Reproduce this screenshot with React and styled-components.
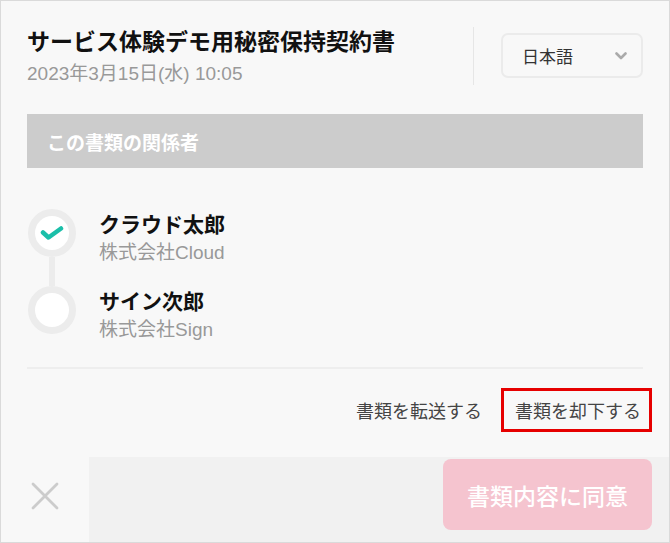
import React from "react";
import styled, { createGlobalStyle } from "styled-components";

const GlobalStyle = createGlobalStyle`
  html, body {
    margin: 0;
    padding: 0;
    background: #ffffff;
  }
  * {
    box-sizing: border-box;
  }
`;

const Frame = styled.div`
  width: 670px;
  height: 543px;
  border: 1px solid #dadada;
  background: #f8f8f8;
  display: flex;
  flex-direction: column;
  font-family: "Liberation Sans", "Noto Sans CJK JP", sans-serif;
  color: #222;
`;

const Header = styled.div`
  display: flex;
  align-items: flex-start;
  padding: 26px 26px 0 26px;
`;

const TitleBlock = styled.div`
  flex: 1;
`;

const Title = styled.h1`
  margin: 0;
  font-size: 23px;
  line-height: 30px;
  font-weight: 700;
  color: #111;
`;

const DateText = styled.div`
  margin-top: 4px;
  font-size: 19px;
  line-height: 26px;
  color: #999;
`;

const VDivider = styled.div`
  width: 1px;
  height: 58px;
  background: #e6e6e6;
  margin-right: 27px;
`;

const Select = styled.div`
  margin-top: 6px;
  width: 142px;
  height: 45px;
  border: 2px solid #ebebeb;
  border-radius: 7px;
  display: flex;
  align-items: center;
  justify-content: space-between;
  padding: 0 14px 0 19px;
  font-size: 17px;
  color: #333;
`;

const SectionBar = styled.div`
  margin: 27px 26px 0 26px;
  height: 54px;
  background: #cccccc;
  display: flex;
  align-items: center;
  padding-left: 20px;
  font-size: 19px;
  font-weight: 700;
  color: #fff;
`;

const People = styled.div`
  margin: 41px 26px 0 27px;
  display: flex;
  flex-direction: column;
`;

const PersonRow = styled.div`
  display: flex;
  align-items: flex-start;
  gap: 23px;
`;

const Track = styled.div`
  width: 48px;
  display: flex;
  flex-direction: column;
  align-items: center;
`;

const Circle = styled.div`
  width: 48px;
  height: 48px;
  border-radius: 50%;
  border: 7px solid #ececec;
  background: #fff;
  display: flex;
  align-items: center;
  justify-content: center;
`;

const Connector = styled.div`
  width: 6px;
  height: 29px;
  background: #ececec;
`;

const PersonText = styled.div`
  padding-top: 2px;
`;

const Name = styled.div`
  font-size: 21px;
  line-height: 28px;
  font-weight: 700;
  color: #111;
`;

const Company = styled.div`
  font-size: 19px;
  line-height: 28px;
  color: #999;
`;

const HDivider = styled.div`
  margin: 23px 26px 0 26px;
  height: 2px;
  background: #eeeeee;
`;

const Actions = styled.div`
  margin: 19px 17px 0 0;
  display: flex;
  justify-content: flex-end;
  align-items: center;
  gap: 8px;
`;

const ActionButton = styled.button`
  height: 44px;
  padding: 0 8px 0 11px;
  border: ${({ highlighted }) =>
    highlighted ? "3px solid #e60000" : "3px solid transparent"};
  background: none;
  font-family: inherit;
  font-size: 18px;
  color: #444;
  cursor: pointer;
`;

const Footer = styled.div`
  margin-top: auto;
  height: 85px;
  display: flex;
`;

const CloseCell = styled.div`
  width: 88px;
  display: flex;
  align-items: center;
  justify-content: center;
  padding-bottom: 7px;
`;

const FooterBar = styled.div`
  flex: 1;
  background: #f1f1f1;
  display: flex;
  justify-content: flex-end;
  align-items: flex-start;
  padding: 2px 17px 0 0;
`;

const AgreeButton = styled.button`
  width: 209px;
  height: 71px;
  border: none;
  border-radius: 8px;
  background: #f5c4cf;
  color: #fff;
  font-family: inherit;
  font-size: 23px;
  font-weight: 500;
`;

const people = [
  { name: "クラウド太郎", company: "株式会社Cloud", done: true },
  { name: "サイン次郎", company: "株式会社Sign", done: false },
];

const Check = () => (
  <svg width="24" height="14" viewBox="0 0 24 14">
    <path
      d="M3 6.5 L8.5 11.5 L21 2.5"
      fill="none"
      stroke="#1bbfa9"
      strokeWidth="4.5"
      strokeLinecap="round"
      strokeLinejoin="round"
    />
  </svg>
);

const Chevron = () => (
  <svg width="12" height="8" viewBox="0 0 12 8">
    <path
      d="M1.5 1.5 L6 6 L10.5 1.5"
      fill="none"
      stroke="#aaa"
      strokeWidth="2.6"
      strokeLinecap="round"
      strokeLinejoin="round"
    />
  </svg>
);

const CloseIcon = () => (
  <svg width="28" height="28" viewBox="0 0 28 28">
    <path
      d="M2 2 L26 26 M26 2 L2 26"
      stroke="#cccccc"
      strokeWidth="2.8"
      strokeLinecap="round"
    />
  </svg>
);

export default function App() {
  return (
    <>
      <GlobalStyle />
      <Frame>
        <Header>
          <TitleBlock>
            <Title>サービス体験デモ用秘密保持契約書</Title>
            <DateText>2023年3月15日(水) 10:05</DateText>
          </TitleBlock>
          <VDivider />
          <Select>
            <span>日本語</span>
            <Chevron />
          </Select>
        </Header>

        <SectionBar>この書類の関係者</SectionBar>

        <People>
          {people.map((p, i) => (
            <PersonRow key={p.name}>
              <Track>
                <Circle>{p.done && <Check />}</Circle>
                {i < people.length - 1 && <Connector />}
              </Track>
              <PersonText>
                <Name>{p.name}</Name>
                <Company>{p.company}</Company>
              </PersonText>
            </PersonRow>
          ))}
        </People>

        <HDivider />

        <Actions>
          <ActionButton>書類を転送する</ActionButton>
          <ActionButton highlighted>書類を却下する</ActionButton>
        </Actions>

        <Footer>
          <CloseCell>
            <CloseIcon />
          </CloseCell>
          <FooterBar>
            <AgreeButton>書類内容に同意</AgreeButton>
          </FooterBar>
        </Footer>
      </Frame>
    </>
  );
}
